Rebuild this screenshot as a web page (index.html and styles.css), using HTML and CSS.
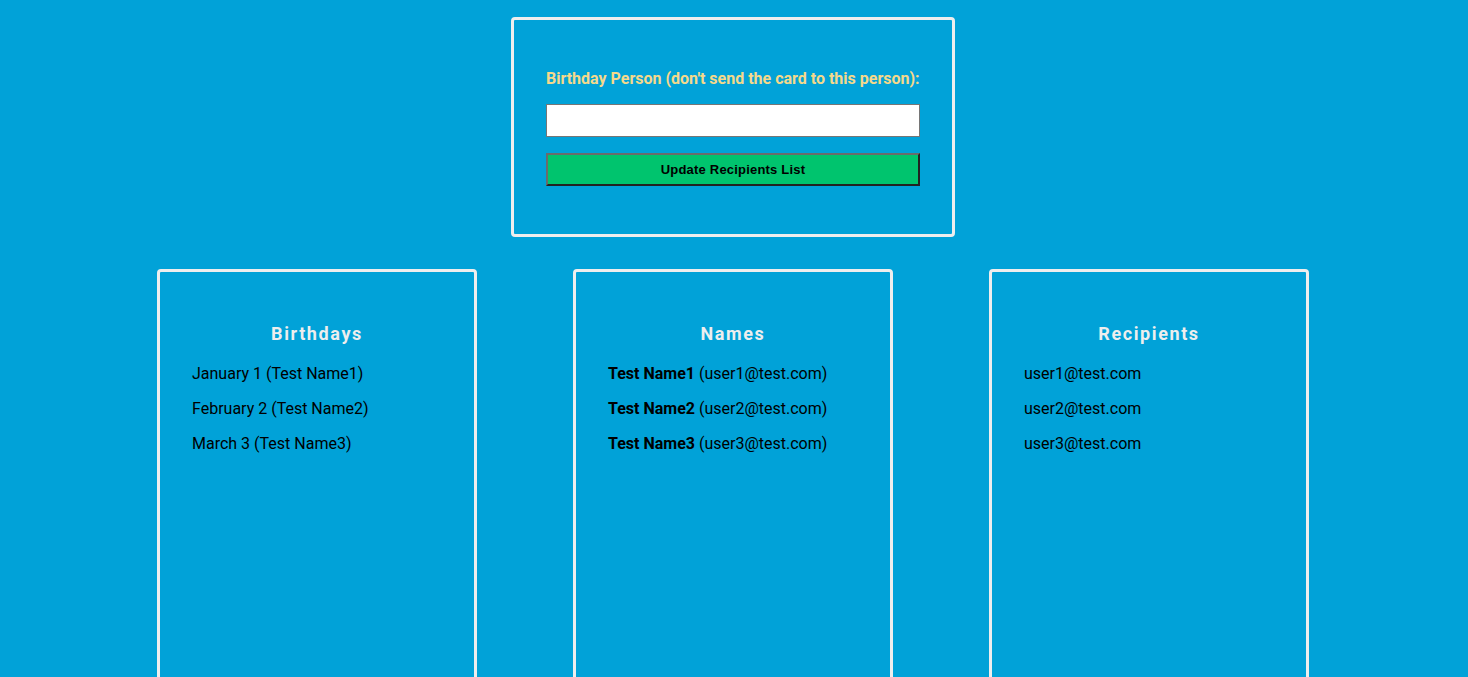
FILE: index.html
```html
<!DOCTYPE html>
<html>
<head>
<meta charset="utf-8">
<link rel="stylesheet" href="styles.css">
</head>
<body>
<div class="page">
  <section class="form-card">
    <label class="form-label" for="bp">Birthday Person (don't send the card to this person):</label>
    <input id="bp" class="form-input" type="text">
    <button class="form-button">Update Recipients List</button>
  </section>
  <div class="columns">
    <section class="col-card">
      <h2 class="col-title">Birthdays</h2>
      <ul class="col-list">
        <li>January 1 (Test Name1)</li>
        <li>February 2 (Test Name2)</li>
        <li>March 3 (Test Name3)</li>
      </ul>
    </section>
    <section class="col-card">
      <h2 class="col-title">Names</h2>
      <ul class="col-list">
        <li><b>Test Name1</b> (user1@test.com)</li>
        <li><b>Test Name2</b> (user2@test.com)</li>
        <li><b>Test Name3</b> (user3@test.com)</li>
      </ul>
    </section>
    <section class="col-card">
      <h2 class="col-title">Recipients</h2>
      <ul class="col-list">
        <li>user1@test.com</li>
        <li>user2@test.com</li>
        <li>user3@test.com</li>
      </ul>
    </section>
  </div>
</div>
</body>
</html>
```

FILE: styles.css
```css
html, body {
  margin: 0;
  padding: 0;
  background: #01a2d8;
  font-family: Roboto, "Liberation Sans", sans-serif;
  overflow: hidden;
}
.page {
  display: flex;
  flex-direction: column;
  align-items: center;
  padding-top: 17px;
  padding-right: 2px;
  gap: 32px;
}
.form-card {
  width: 444px;
  box-sizing: border-box;
  border: 3px solid #eeeeee;
  border-radius: 4px;
  padding: 50px 32px 48px;
  display: flex;
  flex-direction: column;
}
.form-label {
  color: #f5d98b;
  font-weight: 700;
  font-size: 16px;
  line-height: 18px;
  margin-bottom: 16px;
}
.form-input {
  box-sizing: border-box;
  width: 374px;
  height: 33px;
  margin: 0;
  border: 1px solid #767676;
  background: #fff;
}
.form-button {
  box-sizing: border-box;
  width: 374px;
  height: 33px;
  margin-top: 16px;
  background: #00c46e;
  border: 2px solid;
  border-color: #6b6b6b #222 #222 #6b6b6b;
  font-family: "Liberation Sans", Arial, sans-serif;
  font-weight: 700;
  font-size: 13px;
  letter-spacing: 0.2px;
  color: #000;
  padding: 0;
}
.columns {
  display: flex;
  gap: 96px;
}
.col-card {
  width: 320px;
  height: 460px;
  box-sizing: border-box;
  border: 3px solid #eeeeee;
  border-radius: 4px;
  padding: 51px 32px 0;
}
.col-title {
  margin: 0 0 19px;
  text-align: center;
  color: #eeeeee;
  font-size: 18px;
  line-height: 22px;
  font-weight: 700;
  letter-spacing: 1.6px;
}
.col-list {
  list-style: none;
  margin: 0;
  padding: 0;
  display: flex;
  flex-direction: column;
  gap: 16px;
}
.col-list li {
  font-size: 16px;
  line-height: 19px;
  color: #000;
}
```
